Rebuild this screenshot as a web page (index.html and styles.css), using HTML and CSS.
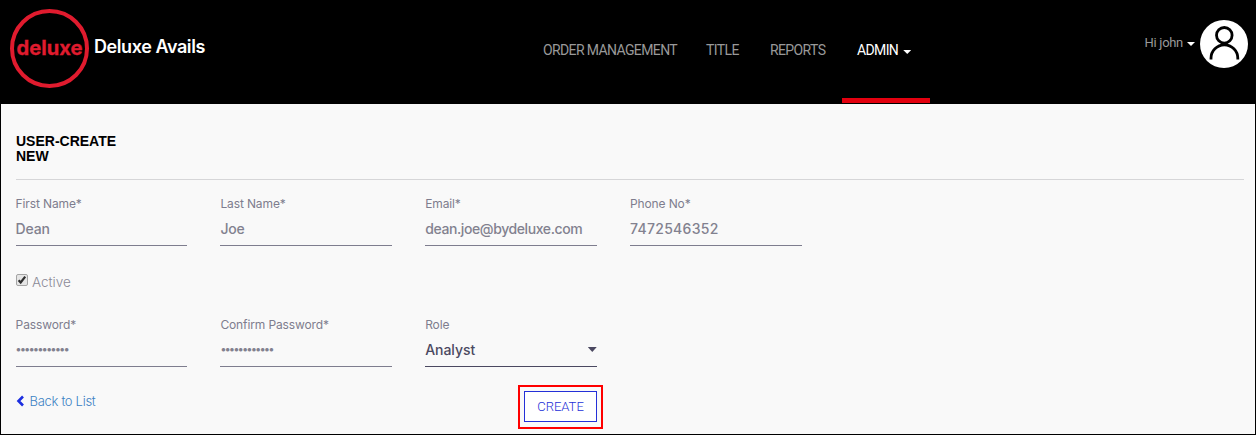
FILE: index.html
```html
<!DOCTYPE html>
<html lang="en">
<head>
<meta charset="utf-8">
<title>Deluxe Avails</title>
<link rel="stylesheet" href="styles.css">
</head>
<body>
<div class="page">
  <header class="header">
    <div class="brand">
      <svg class="logo" width="80" height="80" viewBox="0 0 80 80" role="img" aria-label="deluxe">
        <circle cx="39.5" cy="40.5" r="37.5" fill="none" stroke="#e01b2e" stroke-width="4"/>
        <text class="logo-text" x="6.6" y="46.8" textLength="66" lengthAdjust="spacingAndGlyphs">deluxe</text>
      </svg>
      <span class="brand-name">Deluxe Avails</span>
    </div>
    <nav class="nav">
      <a class="nav-item nav-orders">ORDER MANAGEMENT</a>
      <a class="nav-item nav-title">TITLE</a>
      <a class="nav-item nav-reports">REPORTS</a>
      <a class="nav-item nav-admin">ADMIN<i class="caret"></i></a>
    </nav>
    <div class="account">
      <span class="hello">Hi john</span><i class="caret"></i>
      <svg class="avatar" width="48" height="48" viewBox="0 0 48 48">
        <circle cx="24" cy="24" r="24" fill="#fff"/>
        <circle cx="24.3" cy="15.3" r="7.8" fill="none" stroke="#000" stroke-width="2.8"/>
        <path d="M11 39.5v-1.3a13.4 13.4 0 0 1 26.8 0v1.3" fill="none" stroke="#000" stroke-width="2.8"/>
      </svg>
    </div>
  </header>
  <main class="content">
    <h1 class="title">USER-CREATE<br>NEW</h1>
    <form class="form">
      <div class="row">
        <div class="field"><label class="label">First Name*</label><div class="value">Dean</div></div>
        <div class="field"><label class="label">Last Name*</label><div class="value">Joe</div></div>
        <div class="field"><label class="label">Email*</label><div class="value email">dean.joe@bydeluxe.com</div></div>
        <div class="field"><label class="label">Phone No*</label><div class="value phone">7472546352</div></div>
      </div>
      <div class="active">
        <svg class="checkbox" width="12" height="12" viewBox="0 0 12 12">
          <rect x=".5" y=".5" width="11" height="11" rx="1.5" fill="#e6e6e6" stroke="#a5a5a5"/>
          <path d="M2.6 6.2l2.1 2.3 4.5-5.9" fill="none" stroke="#303030" stroke-width="2.2"/>
        </svg>
        <span class="active-label">Active</span>
      </div>
      <div class="row">
        <div class="field"><label class="label">Password*</label><div class="value dots">••••••••••••</div></div>
        <div class="field"><label class="label">Confirm Password*</label><div class="value dots">••••••••••••</div></div>
        <div class="field role"><label class="label">Role</label><div class="value">Analyst<i class="select-arrow"></i></div></div>
      </div>
      <div class="actions">
        <a class="back"><svg width="9" height="12" viewBox="0 0 9 12"><path d="M7 1.5L2.5 6 7 10.5" fill="none" stroke="#1c2fe0" stroke-width="2.6"/></svg>Back to List</a>
        <div class="highlight"><button class="create" type="button">CREATE</button></div>
      </div>
    </form>
  </main>
</div>
</body>
</html>
```
FILE: styles.css
```css
* { box-sizing: border-box; }
body { margin: 0; font-family: Inter, "Liberation Sans", sans-serif; }
.page { height: 435px; background: #f9f9f9; border: 1px solid #000; border-top: 0; overflow: hidden; }
.header { height: 104px; background: #000; display: flex; align-items: flex-start; }
.brand { display: flex; width: 542px; padding: 8px 0 0 9px; }
.logo { flex: none; }
.logo-text { font: 700 20px Inter, sans-serif; fill: #e01b2e; stroke: #e01b2e; stroke-width: .3px; }
.brand-name { margin: 26px 0 0 4px; font-size: 18px; line-height: 25px; font-weight: 600; letter-spacing: -.42px; color: #fff; white-space: nowrap; }
.nav { display: flex; height: 103px; }
.nav-item { display: flex; height: 103px; padding-top: 41px; font: 400 14px/18px Roboto, sans-serif; letter-spacing: -.62px; color: #999; white-space: nowrap; }
.nav-orders { width: 163px; }
.nav-title { width: 64px; }
.nav-reports { width: 72px; }
.nav-admin { width: 88px; padding-left: 15px; color: #fff; border-bottom: 5px solid #e3000f; }
.caret { width: 8px; height: 4px; margin: 9px 0 0 5px; background: currentColor; clip-path: polygon(0 0, 100% 0, 50% 100%); }
.account { display: flex; margin-left: auto; padding: 20px 7px 0 0; color: #fff; }
.hello { margin-top: 14px; font: 400 13px/18px Roboto, sans-serif; letter-spacing: -.3px; color: #999; }
.account .caret { margin: 22px 5px 0 4px; }
.content { padding: 30px 11px 0 15px; }
.title { margin: 0; height: 46px; font: 700 14px/15px "Liberation Sans", Arial, sans-serif; color: #000; border-bottom: 1px solid #d6d6d8; }
.row { display: grid; grid-template-columns: repeat(4, 171.6px); column-gap: 33.2px; margin-left: -.4px; }
.label { display: block; height: 17px; font-size: 12px; line-height: 16px; letter-spacing: -.12px; color: #7e7d8e; }
.value { display: flex; height: 33px; font-size: 14px; line-height: 32px; font-weight: 500; letter-spacing: -.2px; color: #82818f; border-bottom: 1px solid #7e7d8e; }
.email { letter-spacing: -.4px; }
.phone { letter-spacing: .3px; }
.form { padding-top: 16px; }
.active { display: flex; height: 71px; padding-top: 28px; }
.active-label { margin: -1px 0 0 4px; font-size: 13.5px; line-height: 18px; font-weight: 300; color: #8b8a97; }
.dots { font-size: 11px; line-height: 30px; letter-spacing: -1.5px; }
.role .value { letter-spacing: -.05px; color: #4b4961; border-color: #4b4961; }
.select-arrow { width: 9px; height: 5px; margin: 13px 0 0 auto; background: #4b4961; clip-path: polygon(0 0, 100% 0, 50% 100%); }
.actions { display: flex; padding-top: 18px; }
.back { display: flex; width: 502px; padding-top: 7px; font: 300 13px/18px Inter, sans-serif; letter-spacing: -.3px; color: #3c82c4; }
.back svg { margin: 3px 5px 0 -.5px; }
.highlight { width: 85px; height: 44px; padding: 4px; border: 2px solid #f00; }
.create { display: flex; justify-content: center; width: 73px; height: 31px; margin: 0; padding: 0; border: 1px solid #2430d8; background: #fff; color: #2430d8; font: 300 13px/30px Roboto, sans-serif; }
```
